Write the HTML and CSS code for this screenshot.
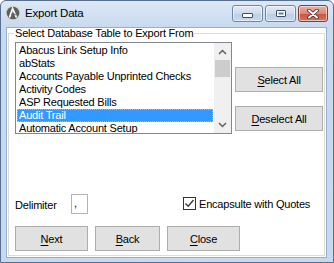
FILE: index.html
```html
<!DOCTYPE html>
<html lang="en">
<head>
  <meta charset="UTF-8" />
  <title>Export Data</title>
  <link rel="stylesheet" href="styles.css">
</head>
<body>
  <div class="window">
    <div class="titlebar">
      <svg class="app-icon" width="16" height="16" viewBox="0 0 16 16">
        <circle cx="8" cy="8" r="7.5" fill="#d6d6d6"/>
        <circle cx="8" cy="8" r="6.3" fill="#5f5f5f"/>
        <path d="M4.5 12.5 L7.6 3.6 L11.5 12.5" fill="none" stroke="#fff" stroke-width="1.8"/>
        <path d="M6.4 9.5 Q8.5 8 10.6 10.2" fill="none" stroke="#5f5f5f" stroke-width="1.2"/>
      </svg>
      <span class="title">Export Data</span>
      <div class="caption-buttons">
        <div class="cap-btn"><span class="glyph-min"></span></div>
        <div class="cap-btn"><span class="glyph-max"></span></div>
        <div class="cap-btn close">
          <svg width="12" height="10" viewBox="0 0 12 10">
            <path d="M2 1.5 L10 8.5 M10 1.5 L2 8.5" stroke="#3b2a28" stroke-width="3.6" stroke-linecap="round"/>
            <path d="M2 1.5 L10 8.5 M10 1.5 L2 8.5" stroke="#fff" stroke-width="2" stroke-linecap="round"/>
          </svg>
        </div>
      </div>
    </div>

    <div class="client">
      <fieldset class="group">
        <legend>Select Database Table to Export From</legend>

        <div class="table-row">
          <div class="listbox">
            <ul class="items">
              <li>Abacus Link Setup Info</li>
              <li>abStats</li>
              <li>Accounts Payable Unprinted Checks</li>
              <li>Activity Codes</li>
              <li>ASP Requested Bills</li>
              <li class="selected">Audit Trail</li>
              <li>Automatic Account Setup</li>
            </ul>
            <div class="scrollbar">
              <div class="arrow">
                <svg width="9" height="6" viewBox="0 0 9 6"><path d="M1 5 L4.5 1.5 L8 5" fill="none" stroke="#606060" stroke-width="1.5"/></svg>
              </div>
              <div class="thumb"></div>
              <div class="track"></div>
              <div class="arrow">
                <svg width="9" height="6" viewBox="0 0 9 6"><path d="M1 1 L4.5 4.5 L8 1" fill="none" stroke="#606060" stroke-width="1.5"/></svg>
              </div>
            </div>
          </div>

          <div class="side-buttons">
            <button class="btn select-all"><u>S</u>elect All</button>
            <button class="btn deselect-all"><u>D</u>eselect All</button>
          </div>
        </div>

        <div class="options-row">
          <span class="delim-label">Delimiter</span>
          <span class="textbox">,</span>
          <label class="check">
            <span class="checkbox">
              <svg width="11" height="11" viewBox="0 0 11 11"><path d="M1.5 5.5 L4.2 8.3 L9.5 2" fill="none" stroke="#3c3c3c" stroke-width="1.4"/></svg>
            </span>
            Encapsulte with Quotes
          </label>
        </div>

        <div class="nav-row">
          <button class="btn next"><u>N</u>ext</button>
          <button class="btn back"><u>B</u>ack</button>
          <button class="btn close-btn"><u>C</u>lose</button>
        </div>
      </fieldset>
    </div>
  </div>
</body>
</html>
```

FILE: styles.css
```css
body {
  margin: 0;
  font-family: "Liberation Sans", Arial, sans-serif;
  font-size: 11px;
  letter-spacing: -0.2px;
  color: #000;
  background: #fff;
}
.window {
  width: 334px;
  height: 263px;
  box-sizing: border-box;
  border: 1px solid #58708f;
  border-radius: 6px 6px 0 0;
  background: linear-gradient(#dde8f5, #c8daef 26px, #c6d9ef);
  display: flex;
  flex-direction: column;
  overflow: hidden;
}
.titlebar {
  height: 26px;
  display: flex;
  align-items: flex-start;
  padding-left: 4px;
}
.app-icon {
  margin-top: 4px;
  flex-shrink: 0;
}
.title {
  margin-left: 4px;
  margin-top: 6px;
  font-size: 11.5px;
  line-height: 13px;
}
.caption-buttons {
  margin-left: auto;
  margin-right: 5px;
  margin-top: 4px;
  display: flex;
  gap: 2px;
}
.cap-btn {
  width: 31px;
  height: 17px;
  box-sizing: border-box;
  border: 1px solid #6f86a6;
  border-radius: 3px;
  background: linear-gradient(#e2ebf6, #cddbec 50%, #b9cde5 51%, #c9daee);
  box-shadow: inset 0 0 0 1px rgba(255,255,255,0.55);
  display: flex;
  align-items: center;
  justify-content: center;
}
.cap-btn.close {
  width: 30px;
  border-color: #8a3b30;
  background: linear-gradient(#eab1a4, #d98776 50%, #c8553f 51%, #d2735e);
}
.glyph-min {
  width: 9px;
  height: 3px;
  margin-top: 3px;
  background: #fff;
  border: 1px solid #3e4d63;
  border-radius: 1px;
}
.glyph-max {
  width: 8px;
  height: 5px;
  border: 1px solid #3e4d63;
  border-radius: 1px;
  background: #fff;
  box-shadow: inset 0 0 0 1.5px #fff, inset 0 0 0 3px #6b7d96;
}

.client {
  margin-left: 5px;
  width: 319px;
  height: 229px;
  border: 1px solid #98aecb;
  background: #fff;
}
.group {
  margin: 0 1px;
  height: 228px;
  box-sizing: border-box;
  border: 1px solid #dcdcdc;
  padding: 3px 1px 0 6px;
  min-width: 0;
}
.group legend {
  padding: 0 1px;
  margin-left: -1px;
  line-height: 11px;
}

.table-row {
  display: flex;
  align-items: flex-start;
}
.listbox {
  width: 217px;
  height: 92px;
  box-sizing: border-box;
  border: 1px solid #828790;
  display: flex;
  background: #fff;
}
.items {
  list-style: none;
  margin: 0;
  padding: 1px 0 0 0;
  flex: 1;
  overflow: hidden;
}
.items li {
  height: 13px;
  line-height: 13px;
  margin: 0 1px;
  padding-left: 2px;
  white-space: nowrap;
}
.items li.selected {
  background: #3399ff;
  color: #fff;
  outline: 1px dotted #f0a85a;
  outline-offset: -1px;
}
.scrollbar {
  width: 17px;
  background: #f0f0f0;
  display: flex;
  flex-direction: column;
}
.arrow {
  height: 17px;
  display: flex;
  align-items: center;
  justify-content: center;
}
.thumb {
  height: 17px;
  margin: 0 1px;
  background: #cdcdcd;
}
.track {
  flex: 1;
}

.side-buttons {
  margin-left: 3px;
  display: flex;
  flex-direction: column;
}
.btn {
  height: 25px;
  box-sizing: border-box;
  border: 1px solid #adadad;
  background: #e1e1e1;
  font: inherit;
  letter-spacing: inherit;
  color: #000;
  padding: 0;
}
.btn u {
  text-decoration-thickness: 1px;
  text-underline-offset: 2px;
}
.select-all, .deselect-all {
  width: 88px;
}
.select-all {
  margin-top: 25px;
}
.deselect-all {
  margin-top: 14px;
}

.options-row {
  margin-top: 60px;
  height: 20px;
  display: flex;
  align-items: center;
}
.delim-label {
  width: 56px;
  padding-top: 1px;
}
.textbox {
  width: 17px;
  height: 20px;
  box-sizing: border-box;
  border: 1px solid #b4b4b4;
  padding-left: 2px;
  line-height: 17px;
}
.check {
  margin-left: 95px;
  display: flex;
  align-items: center;
  gap: 3px;
}
.checkbox {
  width: 13px;
  height: 13px;
  box-sizing: border-box;
  border: 1px solid #333;
  background: #fff;
  display: flex;
  align-items: center;
  justify-content: center;
  margin-top: -1px;
}

.nav-row {
  margin-top: 12px;
  display: flex;
  gap: 7px;
}
.next, .close-btn {
  width: 73px;
}
.back {
  width: 65px;
}
```
